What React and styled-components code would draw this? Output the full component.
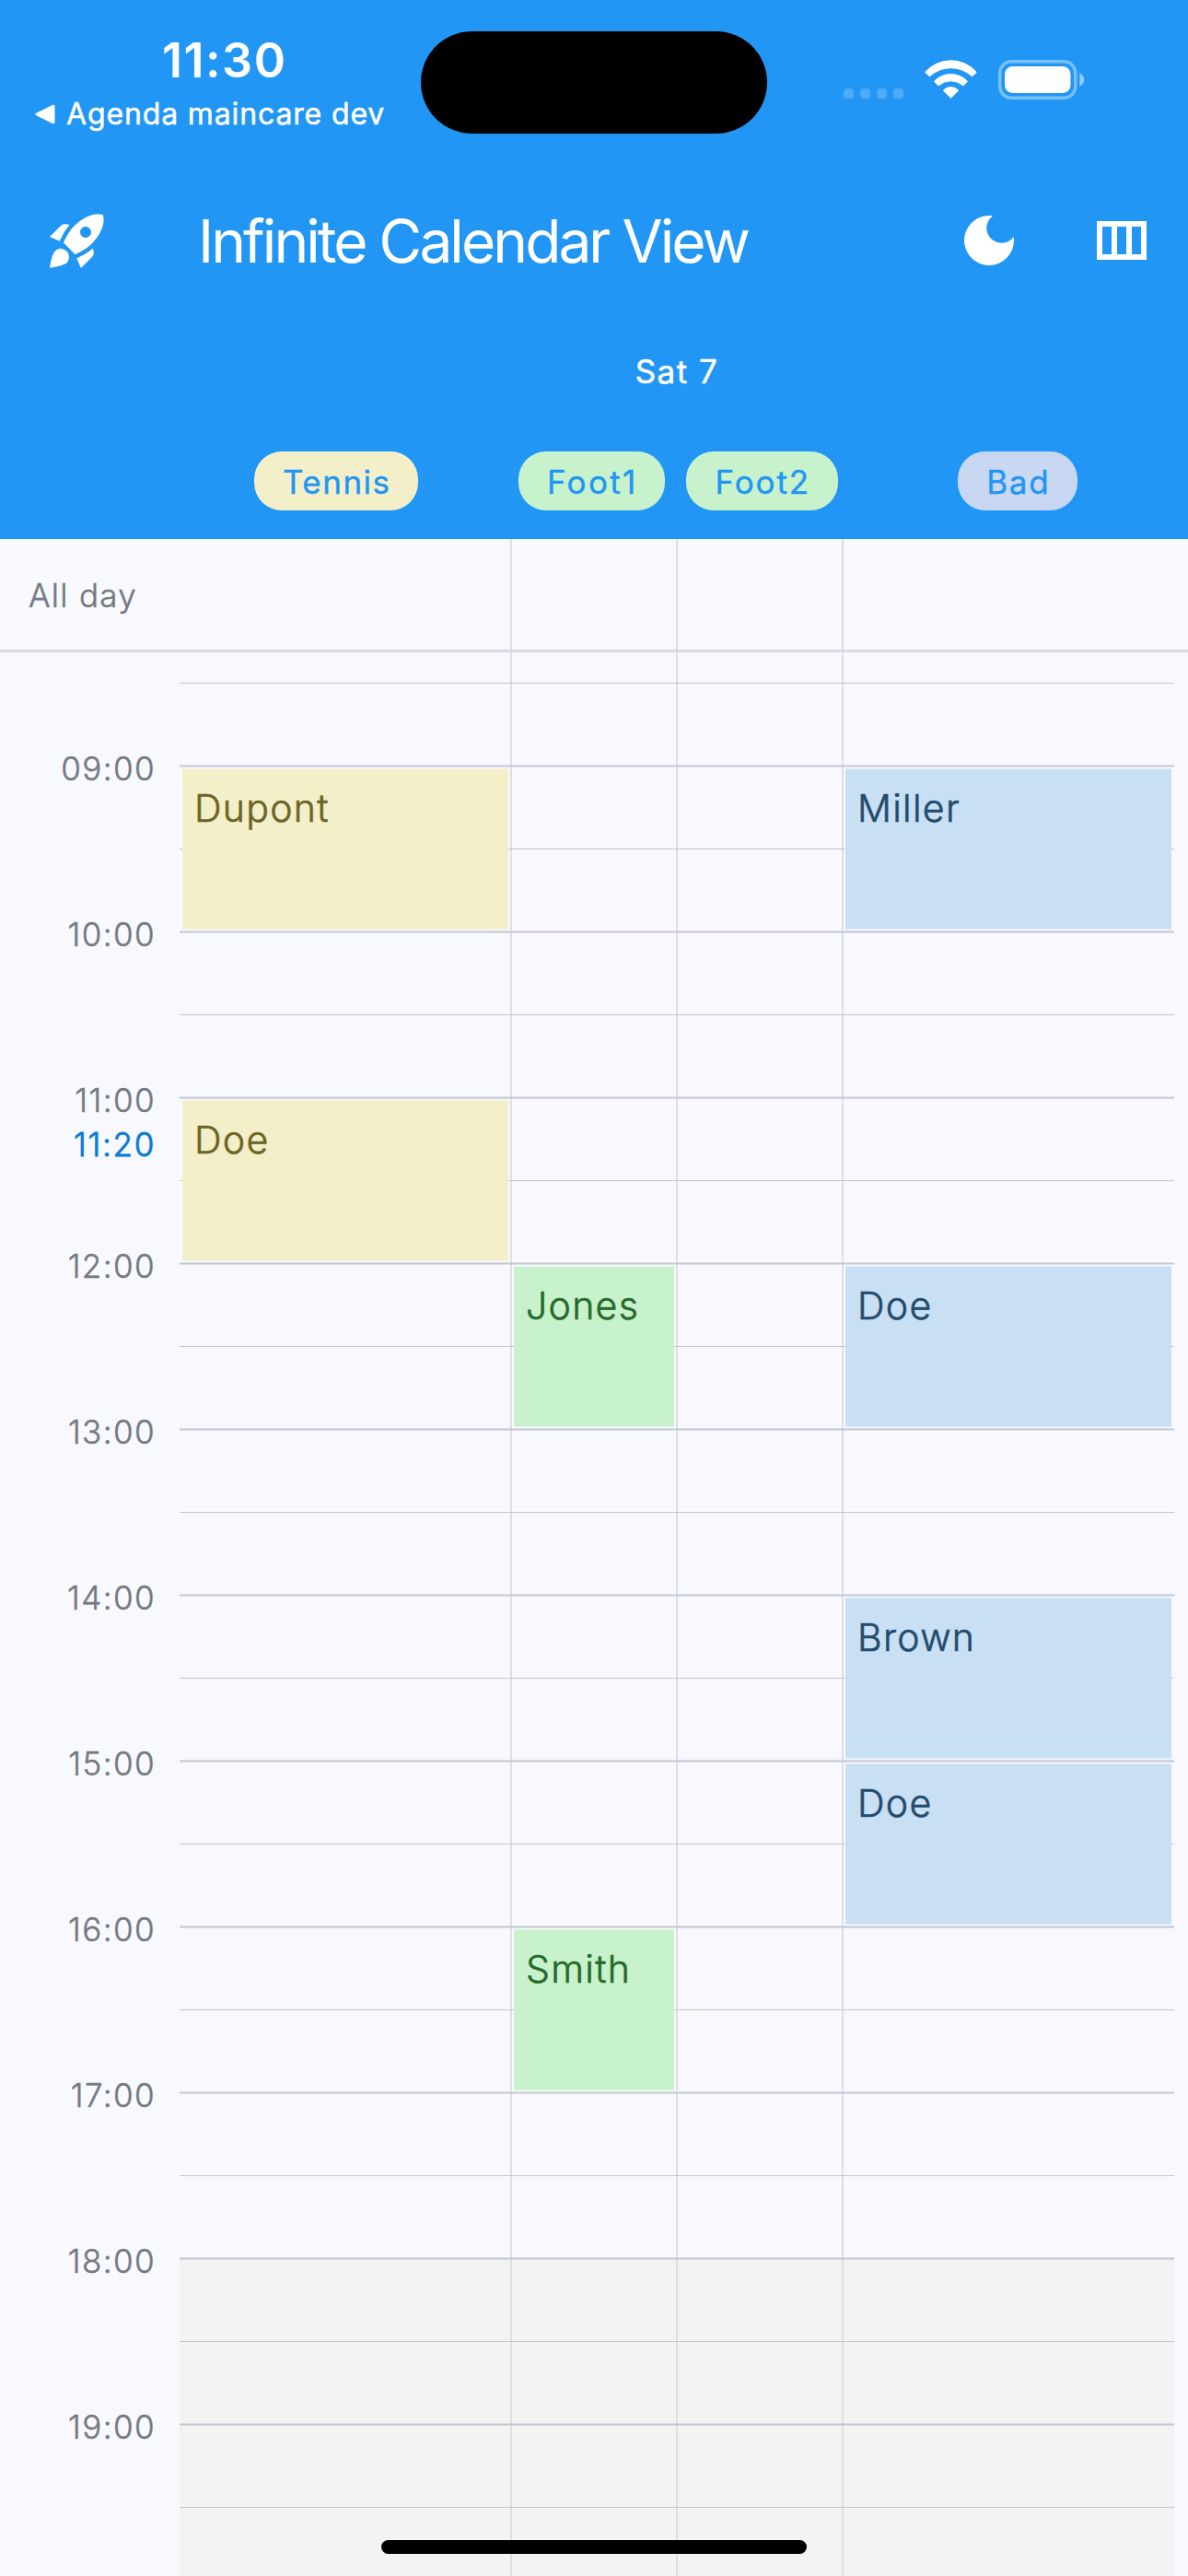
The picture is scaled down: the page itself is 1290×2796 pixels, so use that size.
import React from 'react';
import styled, { createGlobalStyle } from 'styled-components';
import { MdRocketLaunch, MdDarkMode } from 'react-icons/md';

const GlobalStyle = createGlobalStyle`
  *, *::before, *::after { box-sizing: border-box; }
  body {
    margin: 0;
    background: #f8f9ff;
    font-family: Inter, Roboto, sans-serif;
    font-weight: 400;
  }
`;

const COLUMNS = '361px 180px 180px 359px';

const PALETTE = {
  yellow: { fill: '#f3efc9', edge: 'rgba(243, 239, 201, 0.5)', text: '#6b6425' },
  green: { fill: '#c8f2cb', edge: 'rgba(200, 242, 203, 0.5)', text: '#246a29' },
  blue: { fill: '#c8dff4', edge: 'rgba(200, 223, 244, 0.5)', text: '#234b6c' },
};

const Screen = styled.main`
  position: relative;
  display: flex;
  flex-direction: column;
  width: 1290px;
  height: 2796px;
  overflow: hidden;
  background: #f8f9ff;
`;

const Header = styled.header`
  display: flex;
  flex-direction: column;
  height: 585px;
  color: #fff;
  background: #2196f5;
`;

const StatusBar = styled.div`
  display: grid;
  grid-template-columns: 457px 376px 1fr;
  align-items: start;
  height: 177px;
`;

const StatusLeft = styled.div`
  display: flex;
  flex-direction: column;
  gap: 7px;
  padding-top: 36px;
`;

const Clock = styled.time`
  padding-left: 176px;
  font-size: 52px;
  font-weight: 600;
  line-height: 60px;
  letter-spacing: 1.5px;
`;

const BackLink = styled.a`
  display: flex;
  align-items: center;
  gap: 12px;
  padding-left: 38px;
  font-size: 32px;
  font-weight: 400;
  line-height: 41px;
  letter-spacing: 0.86px;
  white-space: nowrap;
  -webkit-text-stroke: 0.5px currentColor;
`;

const Island = styled.div`
  height: 111px;
  margin-top: 33.5px;
  border-radius: 56px;
  background: #000;
`;

const StatusIcons = styled.div`
  display: flex;
  align-items: flex-end;
  padding: 65px 0 0 83px;
`;

const SignalDots = styled.div`
  display: flex;
  gap: 6.7px;
  margin: 0 23px 1px 0;
`;

const SignalDot = styled.i`
  width: 11.3px;
  height: 11px;
  border-radius: 4px;
  background: rgba(255, 255, 255, 0.2);
`;

const WifiIcon = styled.svg`
  width: 57px;
  height: 42px;
  margin: 0 23px 1px 0;
  fill: #fff;
`;

const BatteryIcon = styled.svg`
  width: 94px;
  height: 43px;
`;

const AppBar = styled.div`
  display: flex;
  align-items: center;
  height: 168px;
  padding: 0 36px 0 48px;
`;

const IconButton = styled.button`
  display: flex;
  padding: 0;
  border: 0;
  color: #fff;
  background: none;
  font-size: 72px;
`;

const Title = styled.h1`
  flex: 1;
  margin: 2px 0 0 95px;
  font-size: 64px;
  font-weight: 400;
  line-height: 80px;
  letter-spacing: -2.95px;
  white-space: nowrap;
`;

const Actions = styled.div`
  display: flex;
  gap: 72px;
`;

const DayLabel = styled.div`
  display: flex;
  align-items: center;
  justify-content: center;
  height: 116px;
  padding-left: 180px;
  font-size: 35px;
  font-weight: 400;
  letter-spacing: 1.5px;
  -webkit-text-stroke: 0.5px currentColor;
`;

const ResourceRow = styled.div`
  display: grid;
  grid-template-columns: 2fr 1fr 1fr 2fr;
  align-items: center;
  justify-items: center;
  height: 124px;
  padding: 0 0 2px 180px;
`;

const Chip = styled.span`
  height: 64px;
  padding: 0 29.5px 0 31px;
  border-radius: 30px;
  color: #2196f5;
  background: ${({ $fill }) => $fill};
  font-size: 35px;
  font-weight: 400;
  line-height: 67px;
  letter-spacing: ${({ $tracking }) => $tracking}px;
  white-space: nowrap;
  -webkit-text-stroke: 0.4px currentColor;
`;

const AllDayRow = styled.section`
  display: flex;
  height: 123px;
  border-bottom: 3px solid #d9dbe0;
`;

const AllDayLabel = styled.div`
  width: 195px;
  padding-left: 31px;
  color: #747982;
  font-size: 35px;
  font-weight: 300;
  line-height: 123px;
  letter-spacing: 1.3px;
  -webkit-text-stroke: 0.5px currentColor;
`;

const AllDayCells = styled.div`
  display: grid;
  grid-template-columns: ${COLUMNS};
`;

const AllDayCell = styled.div`
  border-right: 2px solid #dcdfe5;
  &:last-child { border-right: 0; }
`;

const Planner = styled.section`
  display: flex;
  height: 2088px;
  overflow: hidden;
`;

const TimeColumn = styled.div`
  width: 195px;
  padding-top: 105px;
`;

const TimeSlot = styled.div`
  display: flex;
  flex-direction: column;
  align-items: flex-end;
  gap: 6px;
  height: 180px;
  padding-right: 26px;
`;

const TimeText = styled.span`
  color: ${({ $now }) => ($now ? '#087bd8' : '#747982')};
  font-size: 35px;
  font-weight: 300;
  line-height: 42px;
  letter-spacing: ${({ $now }) => ($now ? 1.7 : 1.4)}px;
  -webkit-text-stroke: ${({ $now }) => ($now ? 0.8 : 0.5)}px currentColor;
`;

const Grid = styled.div`
  width: 1080px;
  margin-top: -58px;
`;

const HourRow = styled.div`
  display: grid;
  grid-template-columns: ${COLUMNS};
  grid-template-rows: 3px 88px 1px 88px;
  background: ${({ $closed }) => ($closed ? '#f3f3f3' : 'transparent')};
`;

const Cell = styled.div`
  grid-row: 1 / -1;
  grid-column: ${({ $col }) => $col};
  border-right: ${({ $col }) => ($col < 4 ? '2px solid #dcdfe5' : '0')};
`;

const HourLine = styled.div`
  grid-row: 1;
  grid-column: 1 / -1;
  border: solid rgba(194, 198, 207, 0.5);
  border-width: 1px 0;
  background: #c2c6ce padding-box;
`;

const HalfLine = styled.div`
  grid-row: 3;
  grid-column: 1 / -1;
  background: #c2c6ce;
`;

const Event = styled.article`
  grid-row: 2 / -1;
  grid-column: ${({ $col }) => $col};
  margin: 1px ${({ $col }) => ($col < 4 ? 4 : 3)}px 1px ${({ $col }) => ($col > 1 ? 2 : 3)}px;
  padding: 17px 0 0 13px;
  border: solid ${({ $tone }) => PALETTE[$tone].edge};
  border-width: 1px 0;
  color: ${({ $tone }) => PALETTE[$tone].text};
  background: ${({ $tone }) => PALETTE[$tone].fill} padding-box;
  font-size: 41px;
  font-weight: 300;
  line-height: 50px;
  letter-spacing: 1.3px;
  -webkit-text-stroke: 0.6px currentColor;
`;

const HomeIndicator = styled.div`
  position: absolute;
  bottom: 24px;
  left: 414px;
  width: 462px;
  height: 15px;
  border-radius: 8px;
  background: #000;
`;

const RESOURCES = [
  { name: 'Tennis', fill: '#f3efc9', tracking: 1.5 },
  { name: 'Foot1', fill: '#c8f2cb', tracking: 2.3 },
  { name: 'Foot2', fill: '#c8f2cb', tracking: 1.9 },
  { name: 'Bad', fill: '#c8d8f2', tracking: 1.7 },
];

const EVENTS = {
  9: [{ col: 1, tone: 'yellow', name: 'Dupont' }, { col: 4, tone: 'blue', name: 'Miller' }],
  11: [{ col: 1, tone: 'yellow', name: 'Doe' }],
  12: [{ col: 2, tone: 'green', name: 'Jones' }, { col: 4, tone: 'blue', name: 'Doe' }],
  14: [{ col: 4, tone: 'blue', name: 'Brown' }],
  15: [{ col: 4, tone: 'blue', name: 'Doe' }],
  16: [{ col: 2, tone: 'green', name: 'Smith' }],
};

const HOURS = Array.from({ length: 12 }, (_, i) => i + 8);
const COLS = [1, 2, 3, 4];

const formatHour = (hour) => `${String(hour).padStart(2, '0')}:00`;

export default function App() {
  return (
    <Screen>
      <GlobalStyle />
      <Header>
        <StatusBar>
          <StatusLeft>
            <Clock>11:30</Clock>
            <BackLink>
              <svg width="22" height="22" viewBox="0 0 22 22" fill="#fff" stroke="#fff" strokeWidth="3" strokeLinejoin="round">
                <path d="M2 11 20 2.2V19.8Z" />
              </svg>
              Agenda maincare dev
            </BackLink>
          </StatusLeft>
          <Island />
          <StatusIcons>
            <SignalDots>
              {COLS.map((n) => <SignalDot key={n} />)}
            </SignalDots>
            <WifiIcon viewBox="0 0 57 42" stroke="#fff" strokeWidth="1" strokeLinejoin="round">
              <path d="M.7 13.5A36.7 36.7 0 0 1 56.3 13.5L51.6 17.8A34 34 0 0 0 5.4 17.8Z" />
              <path d="M10.5 23.2A25 25 0 0 1 46.5 23.2L42 28A20.3 20.3 0 0 0 15 28Z" />
              <path d="M20.3 33.2A11 11 0 0 1 36.7 33.2L28.5 41.3Z" />
            </WifiIcon>
            <BatteryIcon viewBox="0 0 94 43" fill="#fff">
              <rect x="1.75" y="1.75" width="82" height="39.5" rx="12.5" fill="none" stroke="#fff" strokeOpacity="0.4" strokeWidth="3.5" />
              <rect x="7" y="7" width="71.5" height="29" rx="8.5" />
              <path d="M88.3 14.5c3 .9 5 3.7 5 7s-2 6.1-5 7z" fillOpacity="0.5" />
            </BatteryIcon>
          </StatusIcons>
        </StatusBar>
        <AppBar>
          <IconButton aria-label="Launch"><MdRocketLaunch /></IconButton>
          <Title>Infinite Calendar View</Title>
          <Actions>
            <IconButton aria-label="Dark mode"><MdDarkMode /></IconButton>
            <IconButton aria-label="Columns">
              <svg width="72" height="72" viewBox="0 0 24 24" fill="#fff">
                <path d="M3 5v14h18V5H3zm5.33 12H5V7h3.33v10zm5.34 0h-3.33V7h3.33v10zM19 17h-3.33V7H19v10z" />
              </svg>
            </IconButton>
          </Actions>
        </AppBar>
        <DayLabel>Sat 7</DayLabel>
        <ResourceRow>
          {RESOURCES.map((r) => (
            <Chip key={r.name} $fill={r.fill} $tracking={r.tracking}>{r.name}</Chip>
          ))}
        </ResourceRow>
      </Header>

      <AllDayRow>
        <AllDayLabel>All day</AllDayLabel>
        <AllDayCells>
          {COLS.map((col) => <AllDayCell key={col} />)}
        </AllDayCells>
      </AllDayRow>

      <Planner>
        <TimeColumn>
          {HOURS.slice(1).map((hour) => (
            <TimeSlot key={hour}>
              <TimeText>{formatHour(hour)}</TimeText>
              {hour === 11 && <TimeText $now>11:20</TimeText>}
            </TimeSlot>
          ))}
        </TimeColumn>
        <Grid>
          {HOURS.map((hour) => (
            <HourRow key={hour} $closed={hour >= 18}>
              {COLS.map((col) => <Cell key={col} $col={col} />)}
              <HourLine />
              <HalfLine />
              {(EVENTS[hour] || []).map((e) => (
                <Event key={e.col} $col={e.col} $tone={e.tone}>{e.name}</Event>
              ))}
            </HourRow>
          ))}
        </Grid>
      </Planner>
      <HomeIndicator />
    </Screen>
  );
}
